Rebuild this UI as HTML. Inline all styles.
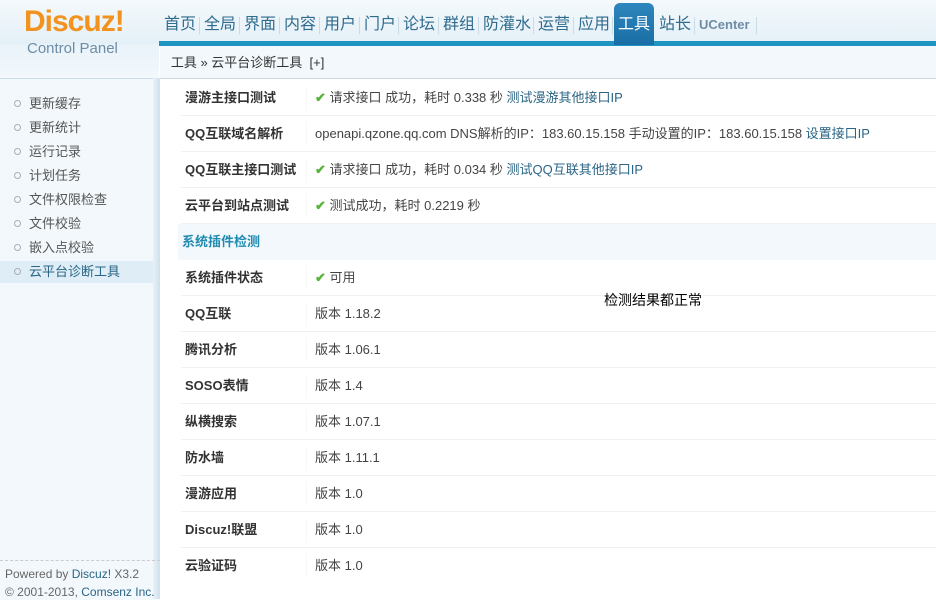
<!DOCTYPE html>
<html><head><meta charset="utf-8"><style>
body{margin:0;width:936px;height:599px;overflow:hidden;background:#fff;font-family:"Liberation Sans","Noto Sans CJK SC",sans-serif;position:relative}
.hd{position:absolute;left:0;top:0;width:936px;height:44px;background:linear-gradient(#f4f9fc,#e4f0f7)}
.hl{position:absolute;left:0;top:44px;width:159px;height:34px;background:linear-gradient(#e9f3f9,#f2f8fc)}
.logo{position:absolute;left:24px;top:5px;font:bold 30px "Liberation Sans",sans-serif;color:#f2931f;letter-spacing:-1px}
.cp{position:absolute;left:27px;top:40px;font-size:15px;color:#6d8da6}
.nav span{position:absolute;top:15px;font-size:16px;color:#2f6b8e;line-height:20px;white-space:nowrap}
.sep{position:absolute;top:17px;width:1px;height:17px;background:#c9dbe6}
.tab{position:absolute;left:614px;top:3px;width:40px;height:42px;background:linear-gradient(#2d86bd,#1a6ea6);border-radius:6px 6px 0 0;color:#fff;font-size:16px;text-align:center;line-height:44px}
.bar{position:absolute;left:159px;top:41px;width:777px;height:5px;background:#1d95c0}
.bc{position:absolute;left:160px;top:46px;width:776px;height:32px;background:#f2f8fc;border-bottom:1px solid #c9d9e3;font-size:13px;color:#333;line-height:34px}
.side{position:absolute;left:0;top:78px;width:155px;height:521px;background:#f2f8fc;border-top:1px solid #c9dde8}
.edge{position:absolute;left:153px;top:78px;width:7px;height:521px;background:linear-gradient(90deg,#e8f1f7,#cfe1ec)}
.side div{position:absolute;left:0;width:153px;height:22px;line-height:22px;font-size:13px;color:#555;padding-left:29px;box-sizing:border-box}
.side div:before{content:"";position:absolute;left:14px;top:7px;width:5px;height:5px;border:1px solid #aab;border-radius:50%}
.side .on{background:#deedf6;color:#2a6585}
.ft{position:absolute;left:0;top:560px;width:160px;border-top:1px dashed #ccc;font-size:12px;color:#666;line-height:18px;padding:4px 0 0 5px;box-sizing:border-box}
.ft a{color:#2a6585}
.row{position:absolute;left:181px;width:755px;height:35px;border-bottom:1px solid #eef2f4;font-size:13px;line-height:36px;color:#444}
.row b{position:absolute;left:4px;color:#333}
.row i{font-style:normal;position:absolute;left:134px;white-space:nowrap}
.row:after{content:"";position:absolute;left:125px;top:6px;height:24px;border-left:1px solid #f7f7f7}
.sec{position:absolute;left:178px;top:224px;width:758px;height:36px;background:#f2f8fc;color:#1f8bb1;font-weight:bold;font-size:13px;line-height:36px;padding-left:4px;box-sizing:border-box}
.ok{color:#5ab339;font-weight:bold}
a{color:#2a6585;text-decoration:none}
</style></head><body>
<div class="hd"></div>
<div class="hl"></div>
<div class="logo">Discuz!</div>
<div class="cp">Control Panel</div>
<div class="nav">
<span style="left:164px">首页</span><div class="sep" style="left:199px"></div>
<span style="left:204px">全局</span><div class="sep" style="left:239px"></div>
<span style="left:244px">界面</span><div class="sep" style="left:279px"></div>
<span style="left:284px">内容</span><div class="sep" style="left:319px"></div>
<span style="left:324px">用户</span><div class="sep" style="left:359px"></div>
<span style="left:364px">门户</span><div class="sep" style="left:398px"></div>
<span style="left:403px">论坛</span><div class="sep" style="left:438px"></div>
<span style="left:443px">群组</span><div class="sep" style="left:478px"></div>
<span style="left:483px">防灌水</span><div class="sep" style="left:533px"></div>
<span style="left:538px">运营</span><div class="sep" style="left:573px"></div>
<span style="left:578px">应用</span><div class="sep" style="left:612px"></div>
<span style="left:659px">站长</span><div class="sep" style="left:694px"></div>
<span style="left:699px;font-size:13px;font-weight:bold;color:#6d8da6;top:15px">UCenter</span><div class="sep" style="left:756px"></div>
</div>
<div class="bar"></div>
<div class="tab">工具</div>
<div class="bc">&nbsp;&nbsp;&nbsp;工具 » 云平台诊断工具 &nbsp;[+]</div>
<div class="side">
<div style="top:14px">更新缓存</div><div style="top:38px">更新统计</div><div style="top:62px">运行记录</div><div style="top:86px">计划任务</div><div style="top:110px">文件权限检查</div><div style="top:134px">文件校验</div><div style="top:158px">嵌入点校验</div><div class="on" style="top:182px">云平台诊断工具</div>
</div>
<div class="edge"></div>
<div class="ft">Powered by <a>Discuz!</a> X3.2<br>© 2001-2013, <a>Comsenz Inc.</a></div>
<div class="row" style="top:80px"><b>漫游主接口测试</b><i><span class="ok">✔</span> 请求接口 成功，耗时 0.338 秒 <a>测试漫游其他接口IP</a></i></div>
<div class="row" style="top:116px"><b>QQ互联域名解析</b><i>openapi.qzone.qq.com DNS解析的IP：183.60.15.158 手动设置的IP：183.60.15.158 <a>设置接口IP</a></i></div>
<div class="row" style="top:152px"><b>QQ互联主接口测试</b><i><span class="ok">✔</span> 请求接口 成功，耗时 0.034 秒 <a>测试QQ互联其他接口IP</a></i></div>
<div class="row" style="top:188px"><b>云平台到站点测试</b><i><span class="ok">✔</span> 测试成功，耗时 0.2219 秒</i></div>
<div class="sec">系统插件检测</div>
<div class="row" style="top:260px"><b>系统插件状态</b><i><span class="ok">✔</span> 可用</i></div>
<div class="row" style="top:296px"><b>QQ互联</b><i>版本 1.18.2</i></div>
<div class="row" style="top:332px"><b>腾讯分析</b><i>版本 1.06.1</i></div>
<div class="row" style="top:368px"><b>SOSO表情</b><i>版本 1.4</i></div>
<div class="row" style="top:404px"><b>纵横搜索</b><i>版本 1.07.1</i></div>
<div class="row" style="top:440px"><b>防水墙</b><i>版本 1.11.1</i></div>
<div class="row" style="top:476px"><b>漫游应用</b><i>版本 1.0</i></div>
<div class="row" style="top:512px"><b>Discuz!联盟</b><i>版本 1.0</i></div>
<div class="row" style="top:548px;border:0"><b>云验证码</b><i>版本 1.0</i></div>
<div style="position:absolute;left:604px;top:290px;font-size:14px;color:#000">检测结果都正常</div>
</body></html>
